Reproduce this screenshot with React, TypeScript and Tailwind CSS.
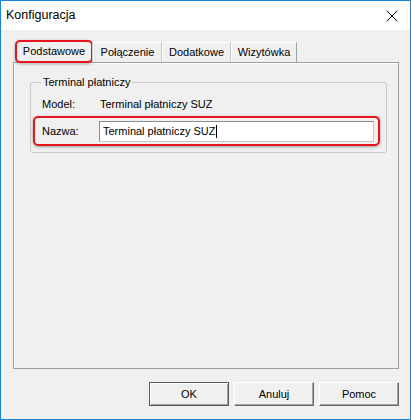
import React from "react";

export default function App() {
  return (
    <div
      className="w-[411px] h-[420px] border border-[#1883d7] bg-[#f0f0f0] flex flex-col text-[11px] text-black"
      style={{ fontFamily: '"Liberation Sans", Arial, sans-serif' }}
    >
      {/* Title bar */}
      <div className="h-[29px] bg-white flex items-center justify-between pl-[5px] pr-[12px]">
        <span className="text-[12.5px] leading-none">Konfiguracja</span>
        <svg width="12" height="12" viewBox="0 0 12 12" className="mr-[0px]">
          <path d="M0.5 0.5 L11.5 11.5 M11.5 0.5 L0.5 11.5" stroke="#111" strokeWidth="1" />
        </svg>
      </div>

      {/* Body */}
      <div className="flex-1 flex flex-col pl-[12px] pr-[11px] pt-[10px]">
        {/* Tabs */}
        <div className="flex items-end h-[22px] pl-[2px] relative z-10">
          <div className="w-[78px] h-[23px] -mb-px flex items-center justify-center bg-[#f0f0f0] border-2 border-[#e8141c] rounded-[5px] shadow-[0_1px_3px_rgba(0,0,0,0.35)]">
            Podstawowe
          </div>
          <div className="w-[69px] h-[20px] flex items-center justify-center border-l border-t border-r border-l-white border-t-white border-r-[#a0a0a0] shadow-[-1px_0_0_#c8c8c8]">
            Połączenie
          </div>
          <div className="w-[69px] h-[20px] flex items-center justify-center border-l border-t border-r border-l-white border-t-white border-r-[#a0a0a0] shadow-[-1px_0_0_#c8c8c8]">
            Dodatkowe
          </div>
          <div className="w-[66px] h-[20px] flex items-center justify-center border-l border-t border-r border-l-white border-t-white border-r-[#a0a0a0] shadow-[-1px_0_0_#c8c8c8]">
            Wizytówka
          </div>
        </div>

        {/* Panel */}
        <div className="h-[307px] border border-[#a0a0a0] shadow-[inset_1px_1px_0_#ffffff] pt-[19px] pl-[16px]">
          {/* Group box */}
          <div className="relative w-[357px] h-[71px] border border-[#c8c8c8] rounded-[3px] flex flex-col pt-[14px]">
            <span className="absolute left-[10px] -top-[8px] bg-[#f0f0f0] px-[2px] leading-[14px]">
              Terminal płatniczy
            </span>
            <div className="flex items-center h-[14px] pl-[11px]">
              <span className="w-[58px]">Model:</span>
              <span>Terminal płatniczy SUZ</span>
            </div>
            <div className="mt-[5px] ml-[2px] w-[347px] h-[30px] flex items-center pl-[7px] border-2 border-[#e8141c] rounded-[5px] shadow-[0_1px_3px_rgba(0,0,0,0.35)]">
              <span className="w-[57px]">Nazwa:</span>
              <div className="w-[275px] h-[21px] bg-white border border-[#8c8c8c] border-r-[#c8c8c8] border-b-[#c8c8c8] flex items-center pl-[3px]">
                <span>Terminal płatniczy SUZ</span>
                <span className="w-px h-[13px] bg-black ml-[1px]" />
              </div>
            </div>
          </div>
        </div>

        {/* Buttons */}
        <div className="flex justify-end gap-[5px] mt-[13px]">
          <button className="w-[80px] h-[24px] border border-[#5a5a5a] bg-[#f0f0f0] shadow-[inset_1px_1px_0_#ffffff,inset_-1px_-1px_0_#a0a0a0] flex items-center justify-center">
            OK
          </button>
          <button className="w-[80px] h-[24px] border border-t-white border-l-white border-r-[#696969] border-b-[#696969] bg-[#f0f0f0] shadow-[inset_-1px_-1px_0_#a0a0a0] flex items-center justify-center">
            Anuluj
          </button>
          <button className="w-[80px] h-[24px] border border-t-white border-l-white border-r-[#696969] border-b-[#696969] bg-[#f0f0f0] shadow-[inset_-1px_-1px_0_#a0a0a0] flex items-center justify-center">
            Pomoc
          </button>
        </div>
      </div>
    </div>
  );
}
